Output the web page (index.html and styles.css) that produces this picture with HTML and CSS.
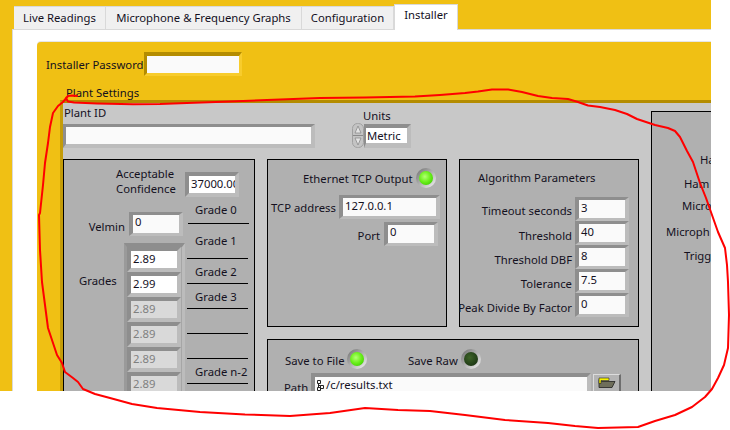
FILE: index.html
```html
<!DOCTYPE html>
<html lang="en">
<head>
<meta charset="utf-8">
<title>Installer</title>
<link rel="stylesheet" href="styles.css">
</head>
<body>
<div class="app">
  <nav class="tabs">
    <div class="tab tab-live">Live Readings</div>
    <div class="tab tab-mic">Microphone &amp; Frequency Graphs</div>
    <div class="tab tab-config">Configuration</div>
    <div class="tab tab-active">Installer</div>
  </nav>
  <div class="tab-panel">
    <div class="front">
      <div class="password-row">
        <span class="lbl pw-lbl">Installer Password</span>
        <div class="field field-gold"><div class="val"></div></div>
      </div>
      <div class="plant-title">Plant Settings</div>
      <div class="plant">
        <div class="plant-head">
          <div class="plant-id">
            <div class="lbl">Plant ID</div>
            <div class="field field-id"><div class="val"></div></div>
          </div>
          <div class="units">
            <div class="lbl units-lbl">Units</div>
            <div class="units-row">
              <svg class="spin" width="12" height="25" viewBox="0 0 12 25">
                <rect x="0.5" y="0.5" width="11" height="24" rx="5" fill="#c4c4c4" stroke="#a0a0a0"/>
                <path d="M1 12.500h10" stroke="#8a8a8a"/>
                <path d="M6 3l3 7H3z" fill="#e4e4e4" stroke="#8a8a8a" stroke-width=".8"/>
                <path d="M6 22l3-7H3z" fill="#e4e4e4" stroke="#8a8a8a" stroke-width=".8"/>
              </svg>
              <div class="field field-metric"><div class="val">Metric</div></div>
            </div>
          </div>
        </div>

        <section class="box box-grades">
          <div class="conf-row">
            <div class="conf-lbl">Acceptable<br>Confidence</div>
            <div class="field field-sm field-conf"><div class="val val-clip">37000.00</div></div>
          </div>
          <div class="grade-area">
            <div class="grade-left">
              <div class="velmin-row">
                <span class="lbl">Velmin</span>
                <div class="field field-sm"><div class="val val-blue">0</div></div>
              </div>
              <div class="grades-row">
                <span class="lbl grades-lbl">Grades</span>
                <div class="array">
                  <div class="field field-sm"><div class="val">2.89</div></div>
                  <div class="field field-sm"><div class="val">2.99</div></div>
                  <div class="field field-sm field-off"><div class="val">2.89</div></div>
                  <div class="field field-sm field-off"><div class="val">2.89</div></div>
                  <div class="field field-sm field-off"><div class="val">2.89</div></div>
                  <div class="field field-sm field-off"><div class="val">2.89</div></div>
                </div>
              </div>
            </div>
            <div class="grade-scale">
              <div class="scale scale-0">Grade 0</div>
              <div class="scale scale-1">Grade 1</div>
              <div class="scale">Grade 2</div>
              <div class="scale">Grade 3</div>
              <div class="scale"></div>
              <div class="scale"></div>
              <div class="scale">Grade n-2</div>
            </div>
          </div>
        </section>

        <section class="box box-tcp">
          <div class="tcp-title">
            <span class="lbl tcp-title-lbl">Ethernet TCP Output</span>
            <span class="led"></span>
          </div>
          <div class="tcp-addr">
            <span class="lbl tcp-addr-lbl">TCP address</span>
            <div class="field field-addr"><div class="val">127.0.0.1</div></div>
          </div>
          <div class="tcp-port">
            <span class="lbl port-lbl">Port</span>
            <div class="field field-sm"><div class="val val-blue">0</div></div>
          </div>
        </section>

        <section class="box box-algo">
          <div class="algo-title">Algorithm Parameters</div>
          <div class="algo-row algo-first"><span class="lbl">Timeout seconds</span><div class="field field-sm"><div class="val">3</div></div></div>
          <div class="algo-row"><span class="lbl">Threshold</span><div class="field field-sm"><div class="val">40</div></div></div>
          <div class="algo-row"><span class="lbl">Threshold DBF</span><div class="field field-sm"><div class="val">8</div></div></div>
          <div class="algo-row"><span class="lbl">Tolerance</span><div class="field field-sm"><div class="val">7.5</div></div></div>
          <div class="algo-row"><span class="lbl">Peak Divide By Factor</span><div class="field field-sm"><div class="val">0</div></div></div>
        </section>

        <section class="box box-save">
          <div class="save-top">
            <span class="lbl save-file">Save to File</span>
            <span class="led"></span>
            <span class="lbl save-raw">Save Raw</span>
            <span class="led led-off"></span>
          </div>
          <div class="path-row">
            <span class="lbl">Path</span>
            <div class="field field-path">
              <div class="val val-path">
                <svg class="path-icon" width="7" height="11" viewBox="0 0 7 11">
                  <path d="M.5.5h3v3h-3zM3.500 5.500h3v3h-3zM.5 7.500h3v3h-3zM1.500 3.500v4M1.500 5.500h2" fill="none" stroke="#222"/>
                </svg>
                <span>/c/results.txt</span>
              </div>
            </div>
            <div class="browse">
              <svg width="18" height="11" viewBox="0 0 18 11">
                <path d="M4 4.500h13l-3 6H1v-8z" fill="#6e6e5a" stroke="#222" stroke-width=".8"/>
                <path d="M1 1h10v2.500H3v3H1z" fill="#f8f400" stroke="#222" stroke-width=".6"/>
              </svg>
            </div>
          </div>
        </section>

        <section class="box box-right">
          <div class="r r1">Ha</div>
          <div class="r r2">Ham</div>
          <div class="r r3">Micro</div>
          <div class="r r4">Microph</div>
          <div class="r r5">Trigg</div>
        </section>
      </div>
    </div>
  </div>
</div>
<svg class="scribble" width="730" height="430" viewBox="0 0 730 430">
  <polyline points="77,96 72,95.500 68,96 66,98 68,101.500 74,102.500 97,103.500 133,104.300 160,104 187,103 230,101.500 267,100 320,98 365,97.500 415,96.500 440,95 465,93 478,91.500 492,89.500 508,89.500 522,92 538,96 552,98 568,99 578,102 588,105.500 600,107 615,110 627,114 637,119 655,125 668,128 675,131 680,137 687,151 693,162 700,183 706,198 712,215 718,232 725,248 727,265 728,282 729,315 728,348 724,365 718,378 712,389 705,397 692,407 675,415 655,421 638,427 598,428 575,426 548,423 505,420 465,415 430,411 398,410 365,408 330,413 290,416 245,414.500 200,412 157,408 132,404 110,398 95,394 83,389 78,382 73,378 65,372 62,363 57,355 52,340 48,328 45,305 42,282 40,250 39,215 40,213 43,185 45,163 48,143 50,127 53,113 58,106 63,102 68,96"/>
</svg>
</body>
</html>
```

FILE: styles.css
```css
* { box-sizing: border-box; }
html, body { margin: 0; padding: 0; background: #fff; }
body {
  position: relative;
  width: 730px;
  height: 430px;
  overflow: hidden;
  font-family: "Noto Sans", sans-serif;
  font-size: 11.3px;
  line-height: 15px;
  color: #14101e;
}
.app {
  width: 711px;
  height: 391px;
  overflow: hidden;
  background: #f0c014;
  padding-top: 3px;
}

/* tabs */
.tabs { display: flex; align-items: flex-end; height: 26px; padding-left: 14px; }
.tab {
  height: 23px;
  background: #f0f0f0;
  border: 1px solid #d9d9d9;
  border-bottom: 0;
  border-left: 0;
  display: flex;
  align-items: center;
  justify-content: center;
  padding-bottom: 1px;
}
.tab-live { width: 92px; }
.tab-mic { width: 196px; }
.tab-config { width: 92px; }
.tab-active {
  width: 64px;
  height: 26px;
  background: #fff;
  border-left: 1px solid #d9d9d9;
  margin-bottom: -1px;
  padding-bottom: 6px;
  position: relative;
}
.tab-panel {
  margin-left: 12px;
  height: 362px;
  background: #fff;
  border-top: 1px solid #d9d9d9;
  border-left: 1px solid #d9d9d9;
  padding: 12px 0 0 24px;
}
.front {
  height: 350px;
  width: 674px;
  background: #f0c014;
  border-top-left-radius: 4px;
  box-shadow: 0 -1px 0 #e6e6e6;
  padding: 10px 0 0 9px;
}

/* controls */
.lbl { white-space: nowrap; }
.field {
  flex: none;
  border-style: solid;
  border-width: 3px 4px;
  border-color: #8e8e8e #bcbcbc #bcbcbc #8e8e8e;
  height: 24px;
}
.val {
  height: 100%;
  background: #fafafa;
  padding-left: 2px;
  line-height: 15px;
  white-space: nowrap;
  overflow: hidden;
}
.val-blue { line-height: 13px; }
.field-sm { width: 54px; }
.field-gold {
  width: 98px;
  border-width: 4px 3px 3px;
  border-color: #b48c00 #f8cc2c #f8cc2c #b48c00;
}
.field-id { width: 252px; border-width: 3px 4px 4px 3px; }
.field-metric { width: 47px; border-width: 4px 4px 5px 2px; }
.field-metric .val { background: #fff; padding-left: 1px; }
.field-conf { height: 25px; margin-top: 5px; border-width: 4px; }
.val-clip { background: #fff; }
.field-addr { width: 101px; }
.field-off .val { background: #d9d9d9; color: #808080; }
.field-path { width: 280px; height: 30px; border-width: 4px; }
.val-path { display: flex; align-items: flex-start; gap: 2px; }
.path-icon { margin-top: 3px; flex: none; }

/* plant */
.password-row { display: flex; align-items: center; height: 24px; }
.pw-lbl { width: 98px; }
.plant-title { margin: 9px 0 0 20px; height: 15px; }
.plant {
  margin: 0 0 0 14px;
  width: 651px;
  height: 291px;
  overflow: hidden;
  background: #c8c8c8;
  border-top: 3px solid #b48c00;
  border-left: 3px solid #c49c08;
  display: grid;
  grid-template-columns: 192px 180px 180px 100px;
  grid-template-rows: 44px 168px 120px;
  column-gap: 12px;
  row-gap: 12px;
}
.plant-head { grid-column: 1 / 4; display: flex; align-items: flex-start; }
.plant-id { width: 289px; padding-top: 2px; }
.plant-id .lbl { height: 19px; padding-left: 1px; }
.units { width: 60px; padding-top: 5px; }
.units-lbl { padding-left: 11px; height: 15px; }
.units-row { display: flex; align-items: center; }
.spin { flex: none; }

.box { background: #b0b0b0; border: 1px solid #000; position: relative; }
.box-grades { grid-column: 1; grid-row: 2 / 4; padding-top: 7px; }
.box-tcp { grid-column: 2; grid-row: 2; }
.box-algo { grid-column: 3; grid-row: 2; }
.box-save { grid-column: 2 / 4; grid-row: 3; }
.box-right { grid-column: 4; grid-row: 1 / 4; margin-top: 8px; }

/* left box */
.conf-row { display: flex; padding-left: 52px; height: 33px; }
.conf-lbl { width: 69px; line-height: 14.500px; }
.grade-area { display: flex; }
.grade-left { width: 123px; padding-top: 12px; }
.velmin-row { display: flex; justify-content: flex-end; align-items: center; gap: 4px; height: 24px; padding-right: 4px; }
.velmin-row .lbl { padding-top: 5px; }
.grades-row { display: flex; margin-top: 7px; }
.grades-lbl { width: 60px; padding: 30px 0 0 15px; }
.array {
  flex: none;
  width: 61px;
  border-style: solid;
  border-width: 4px 3px 0;
  border-color: #8e8e8e #bcbcbc #bcbcbc #9a9a9a;
  background: #a6a6a6;
  display: flex;
  flex-direction: column;
}
.array .field { height: 25px; width: 54px; border-width: 4px; }
.array .val { background: #fff; }
.array .field-off .val { background: #d9d9d9; }
.grade-scale { width: 62px; }
.scale {
  height: 25px;
  border-bottom: 1px solid #000;
  padding: 5px 0 0 8px;
  white-space: nowrap;
  width: 61px;
}
.scale-0 { height: 24px; margin-left: 1px; padding: 2px 0 0 7px; }
.scale-1 { height: 35px; padding-top: 9px; }

/* tcp */
.tcp-title { display: flex; align-items: center; height: 20px; margin-top: 8px; padding-left: 35px; }
.tcp-title-lbl { width: 113px; padding-top: 1px; }
.led {
  flex: none;
  width: 20px;
  height: 20px;
  border-radius: 50%;
  background: radial-gradient(circle at 42% 40%, #b4ff74 0, #6cf01c 45%, #3ecc00 85%) content-box, linear-gradient(135deg, #6e6e6e, #f4f4f4);
  padding: 3px;
}
.led-off { background: radial-gradient(circle at 42% 40%, #3e6428 0, #26441a 55%, #162a10 100%) content-box, linear-gradient(135deg, #6e6e6e, #f4f4f4); }
.tcp-addr { display: flex; align-items: center; padding-left: 3px; margin-top: 7px; }
.tcp-addr-lbl { width: 68px; padding-top: 1px; }
.tcp-port { display: flex; align-items: center; justify-content: flex-end; gap: 4px; padding-right: 8px; margin-top: 3px; }
.port-lbl { padding-top: 2px; }

/* algo */
.algo-title { padding: 10px 0 0 18px; height: 36px; }
.algo-row { display: flex; justify-content: flex-end; align-items: center; gap: 3px; height: 24px; padding-right: 9px; }
.algo-first { height: 25px; }
.algo-row .lbl { padding-top: 4px; }

/* save */
.save-top { display: flex; align-items: center; height: 20px; margin-top: 9px; padding-left: 17px; }
.save-top .lbl { padding-top: 2px; }
.save-file { width: 62px; }
.save-raw { margin-left: 41px; width: 53px; }
.path-row { display: flex; align-items: flex-start; margin-top: 4px; padding-left: 16px; }
.path-row .lbl { width: 27px; padding-top: 7px; }
.browse {
  flex: none;
  width: 28px;
  height: 22px;
  margin: 1px 0 0 2px;
  background: #b4b4b4;
  border-style: solid;
  border-width: 1px 2px 2px 1px;
  border-color: #dcdcdc #6e6e6e #6e6e6e #dcdcdc;
  display: flex;
  justify-content: center;
  padding-top: 2px;
}

/* right box */
.box-right { overflow: hidden; }
.r { position: absolute; white-space: nowrap; }
.r1 { left: 48px; top: 40px; }
.r2 { left: 32px; top: 64px; }
.r3 { left: 30px; top: 86px; }
.r4 { left: 14px; top: 112px; }
.r5 { left: 32px; top: 136px; }

/* red annotation drawn over the screenshot */
.scribble { position: absolute; left: 0; top: 0; pointer-events: none; }
.scribble polyline { fill: none; stroke: #f00; stroke-width: 2; stroke-linejoin: round; stroke-linecap: round; }
```
